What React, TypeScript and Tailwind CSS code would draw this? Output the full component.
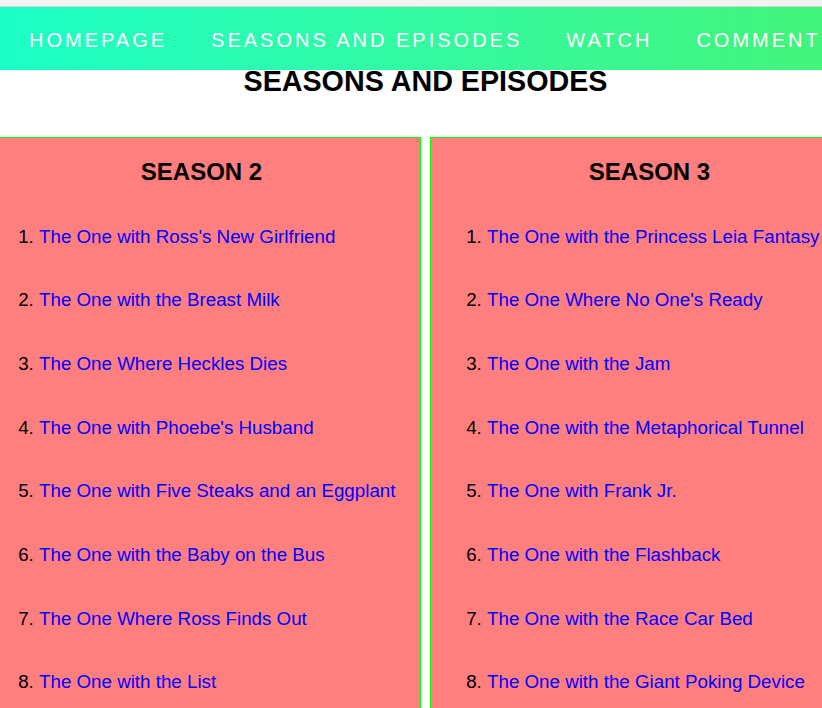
const navItems = ["Homepage", "Seasons and Episodes", "Watch", "Comment"];

const seasons = [
  {
    title: "SEASON 2",
    episodes: [
      "The One with Ross's New Girlfriend",
      "The One with the Breast Milk",
      "The One Where Heckles Dies",
      "The One with Phoebe's Husband",
      "The One with Five Steaks and an Eggplant",
      "The One with the Baby on the Bus",
      "The One Where Ross Finds Out",
      "The One with the List",
    ],
  },
  {
    title: "SEASON 3",
    episodes: [
      "The One with the Princess Leia Fantasy",
      "The One Where No One's Ready",
      "The One with the Jam",
      "The One with the Metaphorical Tunnel",
      "The One with Frank Jr.",
      "The One with the Flashback",
      "The One with the Race Car Bed",
      "The One with the Giant Poking Device",
    ],
  },
];

export default function App() {
  return (
    <div className="w-[822px] h-[708px] overflow-hidden bg-white font-['Liberation_Sans',Arial,sans-serif]">
      <div className="h-[7px] bg-[#f2f2f2] border-b border-[#d4d4d4]" />
      <nav className="h-[63px] pt-[2px] bg-gradient-to-r from-[#1affc6] to-[#42f47a] flex items-center pl-[29px] gap-[44px] whitespace-nowrap">
        {navItems.map((item) => (
          <a key={item} href="#" className="text-white text-[20px] tracking-[3px] uppercase">
            {item}
          </a>
        ))}
      </nav>
      <div className="ml-[-18px] w-[887px]">
        <h1 className="mt-[-5px] text-center text-[28.7px] leading-[33px] font-bold text-black">
          SEASONS AND EPISODES
        </h1>
        <div className="mt-[39px] flex gap-[9px]">
          {seasons.map((s) => (
            <section key={s.title} className="w-[439px] shrink-0 border border-[#00ff00] bg-[#ff7f7f] pt-[20px]">
              <h2 className="text-center text-[24px] leading-[28px] font-bold text-black">{s.title}</h2>
              <ol className="mt-[40.5px] list-decimal pl-[56px] text-[18.75px] leading-[20.7px] text-black whitespace-nowrap">
                {s.episodes.map((ep) => (
                  <li key={ep} className="mb-[43px]">
                    <a href="#" className="text-[#0000ff]">
                      {ep}
                    </a>
                  </li>
                ))}
              </ol>
            </section>
          ))}
        </div>
      </div>
    </div>
  );
}
